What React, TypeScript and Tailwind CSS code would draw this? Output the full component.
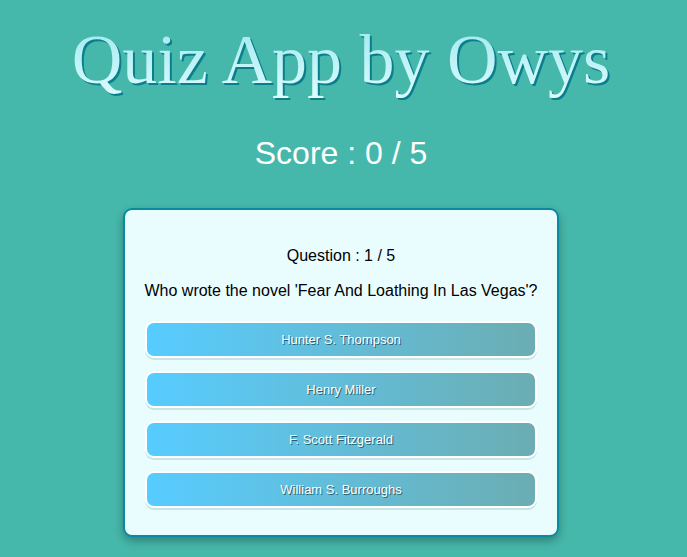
import React from "react";

const answers = ["Hunter S. Thompson", "Henry Miller", "F. Scott Fitzgerald", "William S. Burroughs"];

export default function App() {
  return (
    <div className="min-h-[557px] w-full bg-[#46b8ab] flex flex-col items-center pr-[5px]" style={{ fontFamily: '"Liberation Sans", Arial, sans-serif' }}>
      <h1
        className="mt-[18px] text-[70px] leading-[84px] text-center bg-gradient-to-b from-[#98e6ee] to-[#e0feff] bg-clip-text text-transparent [filter:drop-shadow(2px_2px_0_#0a7e8c)]"
        style={{ fontFamily: '"Liberation Serif", "Times New Roman", serif' }}
      >
        Quiz App by Owys
      </h1>
      <p className="mt-[32px] text-[32px] leading-[38px] text-white">Score : 0 / 5</p>
      <div className="mt-[36px] w-[436px] rounded-[9px] border-2 border-[#0a8aa0] bg-[#e9fdff] shadow-[0_4px_10px_rgba(0,0,0,0.3)] px-[20px] pt-[36px] pb-[27px] flex flex-col items-center">
        <p className="text-[16px] leading-[20px] text-black whitespace-nowrap">Question : 1 / 5</p>
        <p className="mt-[15px] text-[16px] leading-[20px] text-black whitespace-nowrap">Who wrote the novel 'Fear And Loathing In Las Vegas'?</p>
        <div className="mt-[20px] w-full flex flex-col gap-[13px]">
          {answers.map((a) => (
            <button
              key={a}
              className="w-full h-[37px] rounded-[9px] border-2 border-white bg-gradient-to-r from-[#56ccff] to-[#6badb2] text-white text-[13px] [text-shadow:1px_1px_0_#2c5f6e] shadow-[0_2px_0_#c9e4e6]"
            >
              {a}
            </button>
          ))}
        </div>
      </div>
    </div>
  );
}
